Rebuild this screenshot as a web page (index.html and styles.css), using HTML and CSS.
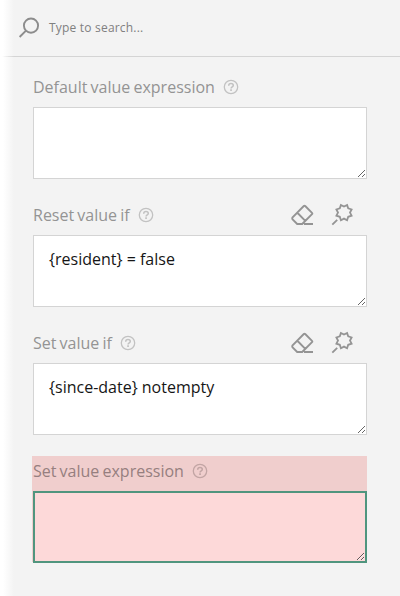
FILE: index.html
```html
<!DOCTYPE html>
<html lang="en">
<head>
<meta charset="utf-8">
<title>Property grid</title>
<link rel="stylesheet" href="styles.css">
</head>
<body>
<svg class="defs" aria-hidden="true">
  <symbol id="help" viewBox="0 0 16 16">
    <circle cx="8" cy="8" r="6.7" fill="none" stroke="currentColor" stroke-width="1.3"/>
    <path d="M5.7 6.7C5.7 5.2 6.8 4.5 8 4.5s2.3.7 2.3 1.9c0 1.5-2.2 1.4-2.2 3.1" fill="none" stroke="currentColor" stroke-width="1.5"/>
    <path d="M7.2 10.3h1.7v1.6H7.2z" fill="currentColor"/>
  </symbol>
  <symbol id="eraser" viewBox="0 0 24 24">
    <path d="M14.2 3 21 9.8Q21.6 10.4 21 11.1L11.2 21H6.2L1.6 16.3Q.9 15.4 1.6 14.4L12.8 3Q13.5 2.4 14.2 3ZM6.6 10 14.3 17.8M13 21H22" fill="none" stroke="currentColor" stroke-width="1.9"/>
  </symbol>
  <symbol id="wand" viewBox="0 0 24 24">
    <path d="M16.1 2 17.2 5.4 20.6 6.5 19 9.6 20.6 12.7 17.2 13.8 16.1 17.2 13 15.6 9.9 17.2 8.8 13.8 5.4 12.7 7 9.6 5.4 6.5 8.8 5.4 9.9 2 13 3.6ZM6.2 16.8 1.3 21.7" fill="none" stroke="currentColor" stroke-width="1.8"/>
  </symbol>
</svg>
<div class="panel">
  <header class="search">
    <svg class="search-icon" viewBox="0 0 22 22"><circle cx="13" cy="8.6" r="7.1"/><path d="M8 13.6 1.6 20"/></svg>
    <span class="search-text">Type to search...</span>
  </header>
  <main class="fields">
    <section class="field">
      <div class="title"><label for="default">Default value expression</label><svg class="help"><use href="#help"/></svg></div>
      <textarea id="default" spellcheck="false"></textarea>
    </section>
    <section class="field">
      <div class="title"><label for="reset">Reset value if</label><svg class="help"><use href="#help"/></svg>
        <div class="actions"><svg><use href="#eraser"/></svg><svg><use href="#wand"/></svg></div></div>
      <textarea id="reset" spellcheck="false">{resident} = false</textarea>
    </section>
    <section class="field">
      <div class="title"><label for="setif">Set value if</label><svg class="help"><use href="#help"/></svg>
        <div class="actions"><svg><use href="#eraser"/></svg><svg><use href="#wand"/></svg></div></div>
      <textarea id="setif" spellcheck="false">{since-date} notempty</textarea>
    </section>
    <section class="field active">
      <div class="title"><label for="expr">Set value expression</label><svg class="help"><use href="#help"/></svg></div>
      <textarea id="expr" spellcheck="false"></textarea>
    </section>
  </main>
</div>
</body>
</html>
```
FILE: styles.css
```css
* { box-sizing: border-box; }
body {
  margin: 0;
  height: 596px;
  overflow: hidden;
  font-family: "Open Sans", sans-serif;
  background: #f3f3f3;
}
.defs { display: none; }
.panel {
  height: 596px;
  background: linear-gradient(to right, #fff 0, #fff 3px, #f3f3f3 14px);
}
.search {
  display: flex;
  align-items: center;
  height: 57px;
  padding: 0 0 1px 18px;
  background: linear-gradient(to right, transparent 2px, #d4d4d4 14px) bottom / 100% 1px no-repeat;
}
.search-icon {
  width: 22px;
  height: 22px;
  fill: none;
  stroke: #8c8c8c;
  stroke-width: 1.9;
}
.search-text {
  margin-left: 9px;
  font-size: 12px;
  line-height: 18px;
  letter-spacing: 0.2px;
  color: #808080;
}
.fields { padding: 15px 33px 0; }
.field { height: 128px; }
.title {
  display: flex;
  align-items: center;
  height: 35px;
  padding-bottom: 5px;
  font-size: 16px;
  word-spacing: -1px;
  color: #949494;
}
.help {
  width: 16px;
  height: 16px;
  margin-left: 8px;
  color: #c2c2c2;
}
.actions {
  display: flex;
  gap: 16px;
  margin-left: auto;
  padding-right: 12px;
  color: #949494;
}
.actions svg { width: 24px; height: 24px; }
textarea {
  display: block;
  width: 334px;
  height: 72px;
  margin: 0;
  padding: 11px 15px;
  border: 1px solid #d4d4d4;
  border-radius: 0;
  outline: 0;
  background: #fff;
  color: #161616;
  font: 16px/24px "Open Sans", sans-serif;
  resize: both;
}
.active {
  height: 106px;
  margin-left: -1px;
  padding-left: 1px;
  background: #f0cecd;
}
.active .title { color: #967f7f; }
.active .help { color: #c2a5a4; }
.active textarea {
  border: 2px solid #50957e;
  background: #fdd9d9;
}
```
